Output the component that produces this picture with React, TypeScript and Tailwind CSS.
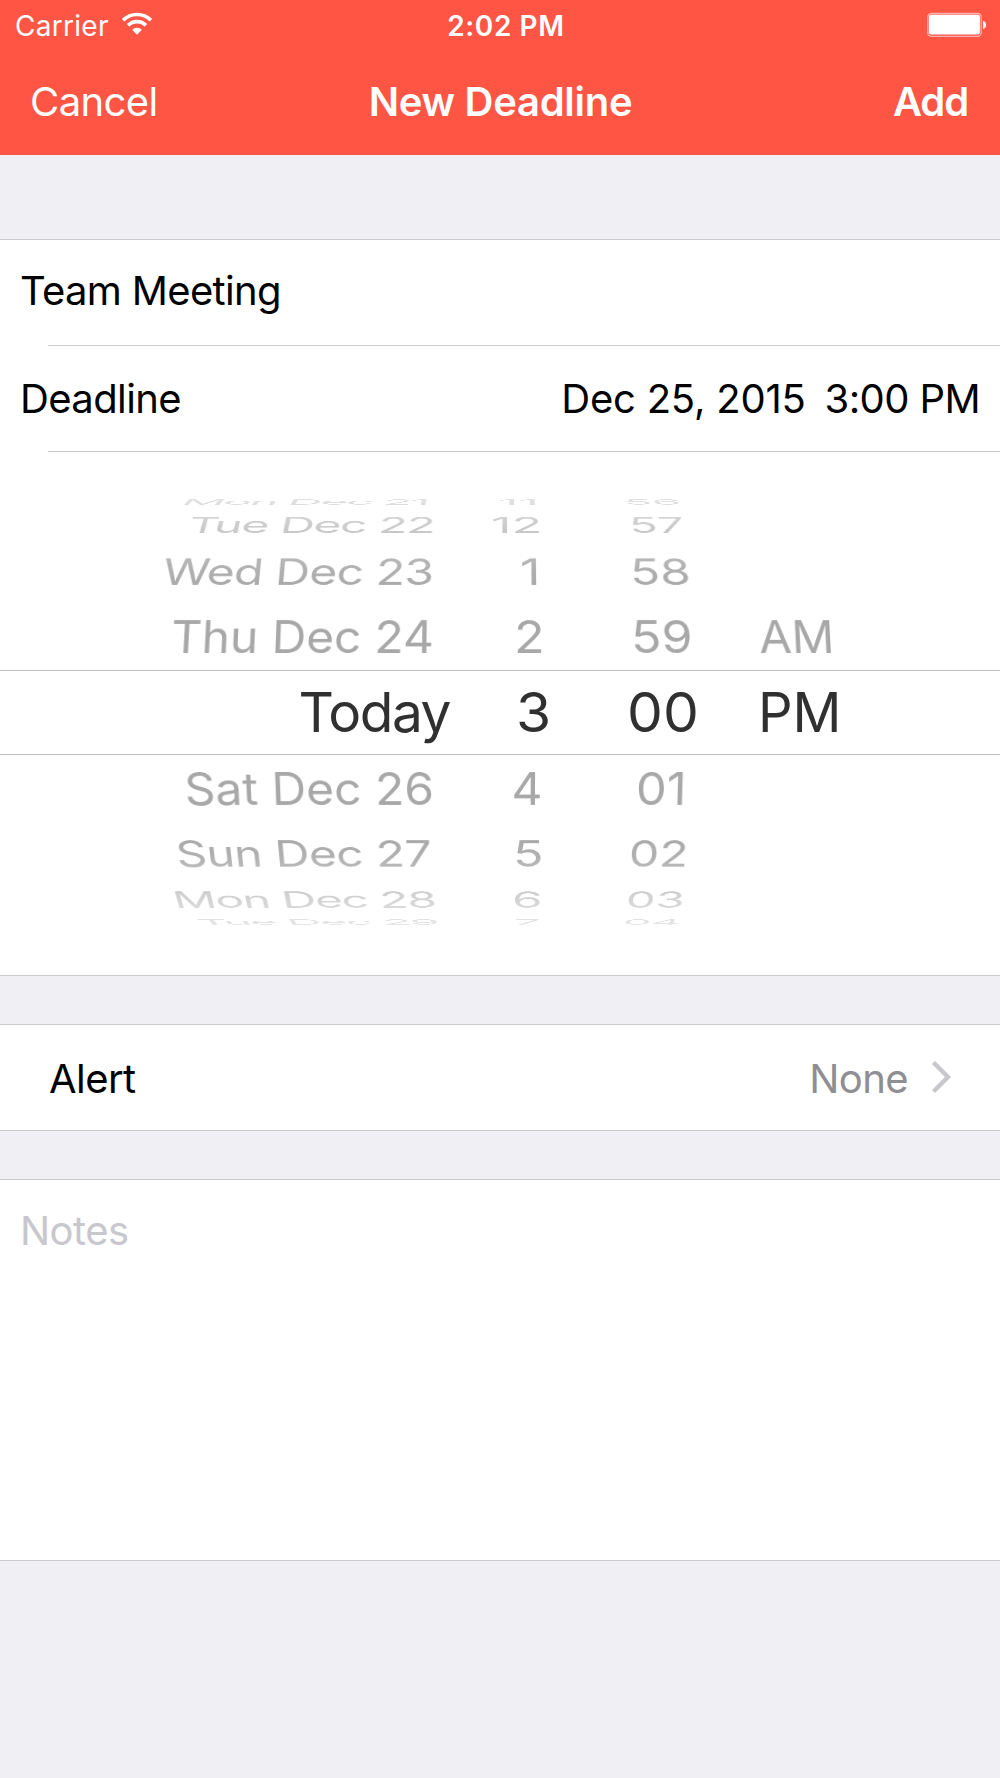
import React from 'react';

type Cell = { text: string; x: number; ls?: number; sx?: number };
type Row = { height: number; angle: number; cells: Cell[] };

const COLUMN_STARTS = [0, 480, 600, 740];

const above: Row[] = [
  {
    height: 14,
    angle: 81,
    cells: [
      { text: 'Mon Dec 21', x: 182.5, ls: -2.1 },
      { text: '11', x: 497.5, sx: 1.05 },
      { text: '56', x: 624, sx: 0.96 },
    ],
  },
  {
    height: 32,
    angle: 62.5,
    cells: [
      { text: 'Tue Dec 22', x: 188.5, ls: -1.35 },
      { text: '12', x: 491, sx: 1.05 },
      { text: '57', x: 628.5, sx: 0.98 },
    ],
  },
  {
    height: 61.5,
    angle: 41,
    cells: [
      { text: 'Wed Dec 23', x: 163, ls: -0.78 },
      { text: '1', x: 520, sx: 1.05 },
      { text: '58', x: 629.5, sx: 1.03 },
    ],
  },
  {
    height: 68.5,
    angle: 20,
    cells: [
      { text: 'Thu Dec 24', x: 171, ls: -0.15 },
      { text: '2', x: 513.5, sx: 1.05 },
      { text: '59', x: 631, sx: 1.045 },
      { text: 'AM', x: 759, sx: 0.985 },
    ],
  },
];

const below: Row[] = [
  {
    height: 67,
    angle: -20,
    cells: [
      { text: 'Sat Dec 26', x: 184.5, ls: 0 },
      { text: '4', x: 511.5 },
      { text: '01', x: 635.5, sx: 1.016 },
    ],
  },
  {
    height: 63,
    angle: -41,
    cells: [
      { text: 'Sun Dec 27', x: 176, ls: -0.6 },
      { text: '5', x: 512.5, sx: 1.05 },
      { text: '02', x: 629 },
    ],
  },
  {
    height: 29.4,
    angle: -62,
    cells: [
      { text: 'Mon Dec 28', x: 173, ls: -1.4 },
      { text: '6', x: 511.5, sx: 1.03 },
      { text: '03', x: 626, sx: 0.98 },
    ],
  },
  {
    height: 16.2,
    angle: -81,
    cells: [
      { text: 'Tue Dec 29', x: 197.5, ls: -2 },
      { text: '7', x: 513.5, sx: 0.99 },
      { text: '04', x: 622.5, sx: 0.94 },
    ],
  },
];

const selected: Cell[] = [
  { text: 'Today', x: 298.6, ls: -1.48 },
  { text: '3', x: 516.3, sx: 1.035 },
  { text: '00', x: 627, sx: 1.035 },
  { text: 'PM', x: 757.7, sx: 0.985 },
];

function Cells({ cells }: { cells: Cell[] }) {
  return (
    <>
      {cells.map((cell, i) => (
        <span key={cell.text} className="flex">
          <span
            className="origin-left whitespace-pre leading-none"
            style={{
              marginLeft: cell.x - COLUMN_STARTS[i],
              letterSpacing: cell.ls,
              transform: cell.sx ? `scaleX(${cell.sx})` : undefined,
            }}
          >
            {cell.text}
          </span>
        </span>
      ))}
    </>
  );
}

function WheelRow({ row }: { row: Row }) {
  return (
    <div
      className="grid origin-[510px_50%] grid-cols-[480px_120px_140px_260px] items-center content-center text-[48px] text-[#a8a8a8]"
      style={{ height: row.height, transform: `perspective(2200px) rotateX(${row.angle}deg)` }}
    >
      <Cells cells={row.cells} />
    </div>
  );
}

function WifiIcon() {
  return (
    <svg className="ml-[12px] mt-[12px] h-[24px] w-[32px]" viewBox="0 0 32 24" fill="none" stroke="#fff" strokeWidth="3.7">
      <path d="M2.1 8.3a19.6 19.6 0 0 1 27.8 0" />
      <path d="M7.1 13.4a12.6 12.6 0 0 1 17.8 0" />
      <path d="M11.2 17.8a6.700 6.700 0 0 1 9.6 0L16 22.700Z" fill="#fff" stroke="none" />
    </svg>
  );
}

function BatteryIcon() {
  return (
    <svg className="ml-auto mr-[13px] mt-[12px] h-[26px] w-[60px]" viewBox="0 0 60 26">
      <rect x="0.8" y="1.5" width="53.4" height="22.8" rx="3.6" fill="none" stroke="#fff" strokeOpacity="0.55" strokeWidth="1.3" />
      <rect x="1.9" y="2.7" width="51" height="19.8" rx="2.2" fill="#fff" />
      <path d="M56 8.8c2 .6 3.1 2 3.1 4.1s-1.100 3.500-3.100 4.100Z" fill="#fff" />
    </svg>
  );
}

export default function App() {
  return (
    <div className="flex h-[1778px] w-[1000px] flex-col overflow-hidden bg-[#efeff4] font-['Inter',sans-serif] text-[40px] text-black">
      <header className="h-[155px] shrink-0 bg-[#ff5545] text-white">
        <div className="grid h-[50px] grid-cols-[1fr_auto_1fr] text-[28px]">
          <div className="flex">
            <span className="ml-[15px] mt-[1px] leading-[50px] tracking-[0.29px]">Carrier</span>
            <WifiIcon />
          </div>
          <span className="ml-[12px] mt-[1px] font-semibold leading-[50px] tracking-[0.6px]">2:02 PM</span>
          <div className="flex">
            <BatteryIcon />
          </div>
        </div>
        <div className="grid grid-cols-[1fr_auto_1fr] pt-[21.5px] leading-[60px]">
          <span className="pl-[30px] tracking-[-0.58px]">Cancel</span>
          <span className="pl-[1px] font-semibold tracking-[-0.28px]">New Deadline</span>
          <span className="pr-[32px] text-right font-semibold tracking-[-1.1px]">Add</span>
        </div>
      </header>

      <section className="mt-[84px] border-y border-[#cbcacf] bg-white">
        <div className="h-[105px] pl-[20px] leading-[102px] tracking-[-0.67px]">Team Meeting</div>
        <div className="ml-[48px] h-px bg-[#d0d0d3]" />
        <div className="flex h-[105px] pl-[20px] pr-[20px] leading-[105px]">
          <span className="tracking-[-0.61px]">Deadline</span>
          <span className="ml-auto mr-[19px] tracking-[-0.22px]">Dec 25, 2015</span>
          <span className="tracking-[-0.6px]">3:00 PM</span>
        </div>
        <div className="ml-[48px] h-px bg-[#c8c7cc]" />

        <div className="h-[523px] pt-[43px]">
          <div className="[mask-image:linear-gradient(to_bottom,rgba(0,0,0,0.3)_0px,rgba(0,0,0,0.6)_32px,rgba(0,0,0,0.9)_74px,#000_95px)]">
            {above.map((row) => (
              <WheelRow key={row.angle} row={row} />
            ))}
          </div>
          <div className="-mt-px grid h-[85px] grid-cols-[480px_120px_140px_260px] items-center border-y border-[#bdbdbd] text-[55px] text-[#303030]">
            <Cells cells={selected} />
          </div>
          <div className="[mask-image:linear-gradient(to_top,rgba(0,0,0,0.25)_0px,rgba(0,0,0,0.5)_32px,rgba(0,0,0,0.9)_74px,#000_95px)]">
            {below.map((row) => (
              <WheelRow key={row.angle} row={row} />
            ))}
          </div>
        </div>
      </section>

      <section className="mt-[48px] flex h-[107px] shrink-0 items-center border-y border-[#cbcacf] bg-white pl-[49px] pr-[47px] pt-[2px]">
        <span className="tracking-[-0.55px]">Alert</span>
        <span className="ml-auto tracking-[-0.58px] text-[#8e8e93]">None</span>
        <svg className="-mt-[4px] ml-[23px] h-[34px] w-[22px]" viewBox="0 0 22 34" fill="none" stroke="#c7c7cc" strokeWidth="4.3">
          <path d="M2.500 2.500 17 17 2.500 31.500" />
        </svg>
      </section>

      <section className="mt-[48px] h-[382px] shrink-0 border-y border-[#cbcacf] bg-white pl-[20px] pt-[20px] leading-[62px] tracking-[-0.53px] text-[#c7c7cd]">
        Notes
      </section>
    </div>
  );
}
